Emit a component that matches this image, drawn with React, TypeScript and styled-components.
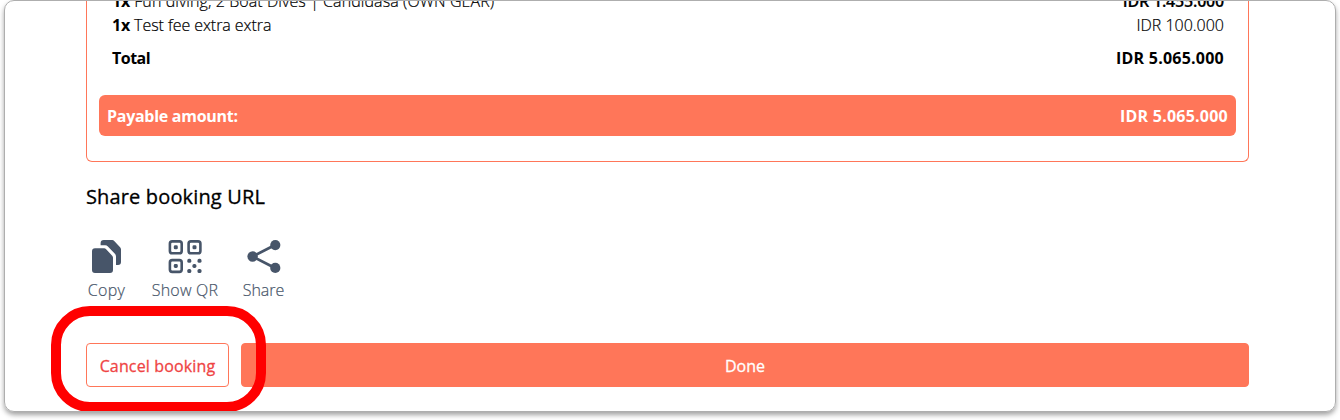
import React from "react";
import styled, { createGlobalStyle, css } from "styled-components";

const CORAL = "#ff7659";

const GlobalStyle = createGlobalStyle`
  * { box-sizing: border-box; }
  body {
    margin: 0;
    background: #fff;
    color: #000;
    font: 300 16px/24px "Open Sans", "Noto Sans", sans-serif;
  }
`;

const Page = styled.div`
  height: 420px;
  padding: 0 4px;
  overflow: hidden;
`;

const Window = styled.main`
  position: relative;
  width: 1332px;
  height: 412px;
  padding: 0 86px 0 81px;
  border: 1px solid #aeaeae;
  border-radius: 10px;
  box-shadow: 0 3px 5px rgba(0, 0, 0, 0.36);
  overflow: hidden;
`;

const Invoice = styled.section`
  height: 161px;
  padding: 0 12px 25px;
  border: 1px solid ${CORAL};
  border-top: 0;
  border-radius: 0 0 6px 6px;
  display: flex;
  flex-direction: column;
  justify-content: flex-end;
`;

const Line = styled.div<{ $total?: boolean }>`
  display: flex;
  flex: none;
  justify-content: space-between;
  height: 24px;
  padding: 0 12px 0 13px;
  white-space: nowrap;
  -webkit-text-stroke: 0.2px currentColor;
  ${(p) => p.$total && css`margin-top: 9px; font-weight: 700; -webkit-text-stroke: 0;`}
`;

const Text = styled.span<{ $track?: number; $strong?: boolean }>`
  letter-spacing: ${(p) => p.$track ?? 0}px;
  ${(p) => p.$strong && css`font-weight: 600;`}
`;

const Quantity = styled.b`
  font-weight: 700;
  letter-spacing: -0.2px;
  -webkit-text-stroke: 0;
`;

const Payable = styled.div`
  display: flex;
  flex: none;
  justify-content: space-between;
  align-items: center;
  height: 41px;
  margin-top: 25px;
  padding: 0 8px;
  border-radius: 6px;
  background: ${CORAL};
  color: #fff;
  font-weight: 700;
`;

const Heading = styled.h2`
  margin: 21px 0 0;
  font-size: 20px;
  font-weight: 400;
  line-height: 28px;
  letter-spacing: 0.15px;
  -webkit-text-stroke: 0.3px currentColor;
`;

const ShareActions = styled.div`
  display: flex;
  gap: 24px;
  margin-top: 26px;
`;

const Action = styled.button<{ $width: number }>`
  display: flex;
  flex-direction: column;
  align-items: center;
  gap: 1px;
  width: ${(p) => p.$width}px;
  padding: 0;
  border: 0;
  background: none;
  color: #475569;
  font: inherit;
  white-space: nowrap;
  -webkit-text-stroke: 0.2px currentColor;
`;

const Icon = styled.svg`
  display: block;
  width: 40px;
  height: 40px;
  fill: currentColor;
`;

const Buttons = styled.div`
  display: flex;
  gap: 12px;
  margin-top: 41px;
`;

const Button = styled.button<{ $outline?: boolean }>`
  height: 44px;
  padding: 2px 0 0;
  border: 1px solid ${CORAL};
  border-radius: 4px;
  font: 400 16px/24px "Open Sans", "Noto Sans", sans-serif;
  -webkit-text-stroke: 0.3px currentColor;
  ${(p) =>
    p.$outline
      ? css`width: 143px; background: #fff; color: #ef4444;`
      : css`flex: 1; background: ${CORAL}; color: #fff;`}
`;

const Highlight = styled.div`
  position: absolute;
  left: 46px;
  top: 305px;
  width: 215px;
  height: 106px;
  border: 10px solid #f00;
  border-radius: 39px;
  pointer-events: none;
`;

const CopyIcon = () => (
  <Icon viewBox="0 0 40 40">
    <path d="M8 11.3h9.2q1 0 1.7.7l6.3 6.8q.8.8.8 1.9V33a3 3 0 0 1-3 3H8a3 3 0 0 1-3-3V14.3a3 3 0 0 1 3-3Z" />
    <path d="M13.6 8.3V6.2a3.2 3.2 0 0 1 3.2-3.2h8.5q1 0 1.7.7l6.3 6.9q.7.8.7 1.9v12.6a3 3 0 0 1-3 3h-2V19.6q0-1.6-1.1-2.8l-7-7.3q-1.1-1.2-2.8-1.2Z" />
  </Icon>
);

const QrIcon = () => (
  <Icon viewBox="0 0 40 40">
    {[[3.5, 3], [22.2, 3], [3.5, 21.7]].map(([x, y]) => (
      <g key={`${x}-${y}`}>
        <rect x={x + 1.4} y={y + 1.4} width="11.8" height="11.8" rx="2.3" fill="none" stroke="currentColor" strokeWidth="2.6" />
        <rect x={x + 5.3} y={y + 5.3} width="4" height="4" rx="1.4" />
      </g>
    ))}
    {[[24.3, 23.8], [34.5, 23.8], [29.4, 28.9], [24.3, 34], [34.5, 34]].map(([x, y]) => (
      <rect key={`${x}-${y}`} x={x - 2} y={y - 2} width="4" height="4" rx="1.6" />
    ))}
  </Icon>
);

const ShareIcon = () => (
  <Icon viewBox="0 0 40 40">
    <path d="M31 8 8.5 19.5 31 31" fill="none" stroke="currentColor" strokeWidth="2.8" />
    <circle cx="31.3" cy="8.1" r="5.1" />
    <circle cx="8.6" cy="19.5" r="5.2" />
    <circle cx="31.3" cy="30.9" r="5.1" />
  </Icon>
);

export default function App() {
  return (
    <>
      <GlobalStyle />
      <Page>
        <Window>
          <Invoice>
            <Line>
              <Text $track={0.08}><Quantity>1x</Quantity> Fun diving, 2 Boat Dives | Candidasa (OWN GEAR)</Text>
              <Text $track={-0.2} $strong>IDR 1.455.000</Text>
            </Line>
            <Line>
              <Text $track={-0.06}><Quantity>1x</Quantity> Test fee extra extra</Text>
              <Text $track={0}>IDR 100.000</Text>
            </Line>
            <Line $total>
              <Text $track={-0.5}>Total</Text>
              <Text $track={0.23}>IDR 5.065.000</Text>
            </Line>
            <Payable>
              <Text $track={-0.28}>Payable amount:</Text>
              <Text $track={0.23}>IDR 5.065.000</Text>
            </Payable>
          </Invoice>
          <Heading>Share booking URL</Heading>
          <ShareActions>
            <Action $width={41}><CopyIcon /><Text $track={0.3}>Copy</Text></Action>
            <Action $width={68}><QrIcon /><Text $track={0.2}>Show QR</Text></Action>
            <Action $width={41}><ShareIcon /><Text>Share</Text></Action>
          </ShareActions>
          <Buttons>
            <Button $outline><Text $track={0.15}>Cancel booking</Text></Button>
            <Button><Text>Done</Text></Button>
          </Buttons>
          <Highlight />
        </Window>
      </Page>
    </>
  );
}
